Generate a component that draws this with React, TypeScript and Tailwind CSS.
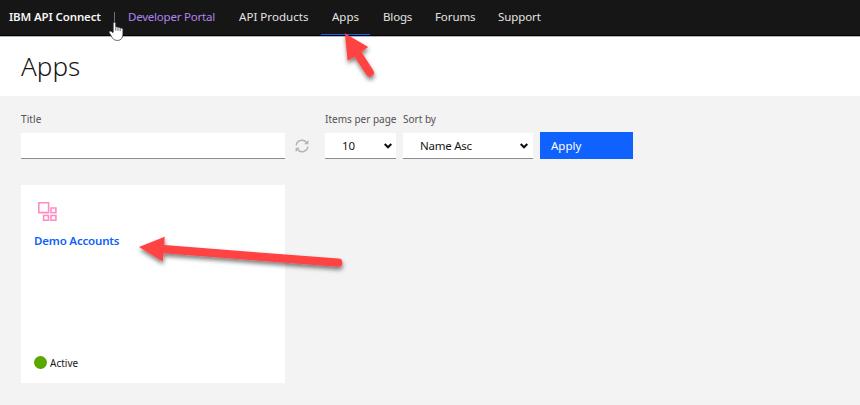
import React from "react";

const links = [
  { label: "API Products", cls: "ml-6 w-[70px]", text: "tracking-[0.04px]" },
  { label: "Apps", cls: "ml-[12px] w-[49px] pl-[11px] border-b border-[#0f62fe]", text: "" },
  { label: "Blogs", cls: "ml-[13px] w-[30px]", text: "tracking-[-0.15px]" },
  { label: "Forums", cls: "ml-[22px] w-[41px]", text: "tracking-[-0.1px]" },
  { label: "Support", cls: "ml-[22px] w-[44px]", text: "tracking-[-0.1px]" },
];

function Chevron() {
  return (
    <svg className="h-[6px] w-[8px] shrink-0" viewBox="0 0 8 6" fill="none" stroke="#111" strokeWidth="2.2">
      <path d="M.7 1 4 4.2 7.3 1" />
    </svg>
  );
}

function Arrows() {
  return (
    <svg className="pointer-events-none absolute left-0 top-0 h-[405px] w-[860px]" viewBox="0 0 860 405">
      <defs>
        <filter id="shadow" x="-20%" y="-50%" width="140%" height="220%">
          <feDropShadow dx="0.5" dy="3" stdDeviation="2" floodColor="#000" floodOpacity="0.5" />
        </filter>
      </defs>
      <g fill="#ff4343" filter="url(#shadow)">
        <path d="M344.8 33.3 368.2 47 361.5 52 373.2 70.3A4 4 0 0 1 366.3 74.8L354.5 56.8 347.6 60.8Z" />
        <path d="M139 247 164.7 236.7 164.3 245.1 338.5 258.6A4 4 0 0 1 338 266.8L163.5 253.2 162.8 261.5Z" />
      </g>
      <path
        d="M113.2 32V23.6q0-1.3 1.2-1.3t1.3 1.3v3.3q1.6-.7 2.2.6 1.4-.7 2.1.6 2.7-.5 2.9 1.3v5.1q0 5.6-5.5 6-3.5.1-5-2.6l-3.1-5.2q-.6-1.4.6-1.7 1.5-.2 3.3 2.1"
        fill="#fff"
        stroke="#262635"
        strokeWidth=".7"
      />
      <path d="M115.8 27.3v3.4M118 28v2.8M120.2 28.5v2.6" stroke="#262635" strokeWidth=".7" />
    </svg>
  );
}

export default function App() {
  return (
    <div className="relative h-[405px] w-[860px] overflow-hidden bg-[#f3f3f3] font-['Noto_Sans',sans-serif] text-[11.5px] text-[#161616]">
      <header className="flex h-9 items-stretch border-b border-black bg-[#161616] pl-[9px] leading-[33px] whitespace-nowrap text-[#e4e4e4]">
        <div className="w-[105px] font-semibold tracking-[-0.13px] text-[#f4f4f4]">IBM API Connect</div>
        <div className="mt-3 h-[10px] w-px bg-[#6f6f6f]" />
        <div className="ml-[13px] w-[87px] tracking-[-0.22px] text-[#b184ed]">Developer Portal</div>
        <nav className="flex">
          {links.map((l) => (
            <a key={l.label} className={l.cls}>
              <span className={l.text}>{l.label}</span>
            </a>
          ))}
        </nav>
      </header>
      <div className="h-[60px] border-t border-[#b5b5b5] bg-white pl-[21px]">
        <h1 className="text-[26px] leading-[59px] font-light">Apps</h1>
      </div>
      <main className="px-[21px] pt-[17px]">
        <form className="flex items-end whitespace-nowrap">
          <div className="w-[264px]">
            <div className="h-[20px] text-[10px] leading-[13px] tracking-[0.1px] text-[#525252]">Title</div>
            <div className="h-[26px] border-b border-[#8d8d8d] bg-white" />
          </div>
          <svg className="mb-[6px] ml-[10px] h-[14px] w-[14px]" viewBox="0 0 14 14" fill="none" stroke="#b4b4b4" strokeWidth="1.5">
            <path d="M1.2 6.3A5.8 5.8 0 0 1 11.3 3.2M12.8 7.7A5.8 5.8 0 0 1 2.7 10.8" />
            <path d="M13.4.9v4.3H9.1ZM.6 13.1V8.8h4.3Z" fill="#b4b4b4" stroke="none" />
          </svg>
          <div className="ml-[16px] w-[71px]">
            <div className="h-[20px] text-[10px] leading-[13px] text-[#525252]">Items per page</div>
            <div className="flex h-[26px] items-center justify-between border-b border-[#8d8d8d] bg-white pr-1 pl-[17px]">
              <span>10</span>
              <Chevron />
            </div>
          </div>
          <div className="ml-[7px] w-[130px]">
            <div className="h-[20px] text-[10px] leading-[13px] text-[#525252]">Sort by</div>
            <div className="flex h-[26px] items-center justify-between border-b border-[#8d8d8d] bg-white pr-[5px] pl-[17px]">
              <span className="tracking-[-0.25px]">Name Asc</span>
              <Chevron />
            </div>
          </div>
          <button type="button" className="ml-[7px] h-[27px] w-[93px] bg-[#0f62fe] pl-[11px] text-left text-white">
            Apply
          </button>
        </form>
        <article className="mt-[26px] flex h-[198px] w-[264px] flex-col bg-white pt-[17px] pl-[13px]">
          <svg className="ml-1 h-[20px] w-[20px]" viewBox="0 0 20 20" fill="none" stroke="#ff8bc4" strokeWidth="1.6">
            <path d="M.8.8h9.8v9.8H.8zM13 6h4.9v4.7H13zM5.6 13.5h4.9v4.7H5.6zM13 13.5h4.9v4.7H13z" />
          </svg>
          <a className="mt-[10px] leading-[18px] font-semibold tracking-[-0.18px] text-[#0f62fe]">Demo Accounts</a>
          <div className="mt-auto mb-[12px] flex items-center gap-[3px] text-[10px] leading-[16px]">
            <span className="h-[13px] w-[13px] rounded-full bg-[#5aa700]" />
            <span className="pt-px">Active</span>
          </div>
        </article>
      </main>
      <Arrows />
    </div>
  );
}
